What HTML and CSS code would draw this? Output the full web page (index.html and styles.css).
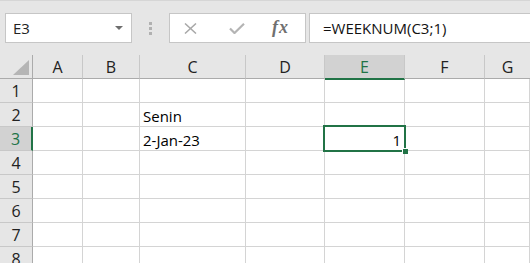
FILE: index.html
```html
<!DOCTYPE html>
<html lang="en">
<head>
  <meta charset="UTF-8">
  <title>WEEKNUM</title>
  <link rel="stylesheet" href="styles.css">
</head>
<body>
  <div class="sheet">
    <!-- name box + formula bar -->
    <div class="toolbar">
      <div class="namebox">
        <span>E3</span>
        <span class="caret"></span>
      </div>
      <div class="grip"><i></i><i></i><i></i></div>
      <div class="fxbox">
        <svg class="ico-x" width="13" height="11" viewBox="0 0 13 11"><path d="M1 0.5 L12 10.5 M12 0.5 L1 10.5" stroke="#a8a8a8" stroke-width="1.5" fill="none"/></svg>
        <svg class="ico-ok" width="16" height="11" viewBox="0 0 16 11"><path d="M1 5.5 L5.5 10 L15 0.8" stroke="#b4b4b4" stroke-width="2.2" fill="none"/></svg>
        <span class="fx">fx</span>
      </div>
      <div class="formula">=WEEKNUM(C3;1)</div>
    </div>

    <!-- grid -->
    <div class="grid">
      <div class="corner"><span class="tri"></span></div>
      <div class="colhead">A</div>
      <div class="colhead">B</div>
      <div class="colhead">C</div>
      <div class="colhead">D</div>
      <div class="colhead active">E</div>
      <div class="colhead">F</div>
      <div class="colhead last">G</div>

      <div class="rowhead">1</div>
      <div class="cell"></div><div class="cell"></div><div class="cell"></div><div class="cell"></div><div class="cell"></div><div class="cell"></div><div class="cell"></div>

      <div class="rowhead">2</div>
      <div class="cell"></div><div class="cell"></div><div class="cell">Senin</div><div class="cell"></div><div class="cell"></div><div class="cell"></div><div class="cell"></div>

      <div class="rowhead active">3</div>
      <div class="cell"></div><div class="cell"></div><div class="cell">2-Jan-23</div><div class="cell"></div><div class="cell num selected">1</div><div class="cell"></div><div class="cell"></div>

      <div class="rowhead">4</div>
      <div class="cell"></div><div class="cell"></div><div class="cell"></div><div class="cell"></div><div class="cell"></div><div class="cell"></div><div class="cell"></div>

      <div class="rowhead">5</div>
      <div class="cell"></div><div class="cell"></div><div class="cell"></div><div class="cell"></div><div class="cell"></div><div class="cell"></div><div class="cell"></div>

      <div class="rowhead">6</div>
      <div class="cell"></div><div class="cell"></div><div class="cell"></div><div class="cell"></div><div class="cell"></div><div class="cell"></div><div class="cell"></div>

      <div class="rowhead">7</div>
      <div class="cell"></div><div class="cell"></div><div class="cell"></div><div class="cell"></div><div class="cell"></div><div class="cell"></div><div class="cell"></div>

      <div class="rowhead">8</div>
      <div class="cell"></div><div class="cell"></div><div class="cell"></div><div class="cell"></div><div class="cell"></div><div class="cell"></div><div class="cell"></div>
    </div>
  </div>
</body>
</html>
```

FILE: styles.css
```css
/* Page */
body {
  margin: 0;
  background: #fff;
  font-family: "Open Sans", "Noto Sans", sans-serif;
  font-size: 15px;
  color: #000;
}
.sheet {
  width: 530px;
  height: 263px;
  overflow: hidden;
}

/* Formula bar strip */
.toolbar {
  box-sizing: border-box;
  height: 55px;
  border-top: 1px solid #d6d6d6;
  background: #e6e6e6;
  padding-top: 12px;
  display: flex;
  align-items: flex-start;
}
.namebox {
  box-sizing: border-box;
  margin-left: 5px;
  width: 127px;
  height: 30px;
  border: 1px solid #c6c6c6;
  background: #fff;
  display: flex;
  align-items: center;
  justify-content: space-between;
  padding: 0 8px 0 7px;
  color: #222;
}
.caret {
  width: 0;
  height: 0;
  border-left: 4px solid transparent;
  border-right: 4px solid transparent;
  border-top: 4px solid #6e6e6e;
}
.grip {
  width: 37px;
  height: 30px;
  display: flex;
  flex-direction: column;
  align-items: center;
  justify-content: center;
  gap: 2px;
}
.grip i {
  display: block;
  width: 3px;
  height: 3px;
  background: #b1b1b1;
}
.fxbox {
  box-sizing: border-box;
  width: 137px;
  height: 30px;
  border: 1px solid #c6c6c6;
  background: #fff;
  display: flex;
  align-items: center;
  padding-left: 14px;
}
.ico-x { margin-right: 32px; }
.ico-ok { margin-right: 27px; }
.fx {
  font-family: "Liberation Serif", serif;
  font-style: italic;
  font-weight: bold;
  font-size: 18px;
  color: #707070;
  letter-spacing: 1px;
  margin-top: -2px;
}
.formula {
  box-sizing: border-box;
  flex: 1;
  margin-left: 3px;
  height: 30px;
  border: 1px solid #c6c6c6;
  border-right: none;
  background: #fff;
  padding-left: 13px;
  line-height: 28px;
  color: #111;
}

/* Sheet grid */
.grid {
  display: grid;
  grid-template-columns: 33px 50px 57px 106px 79px 80px 80px 1fr;
  grid-auto-rows: 24px;
}
.grid > div {
  box-sizing: border-box;
}
.corner, .colhead, .rowhead {
  background: #e6e6e6;
  color: #222;
  font-size: 16px;
}
.corner {
  border-right: 1px solid #ababab;
  border-bottom: 1px solid #ababab;
  position: relative;
}
.tri {
  position: absolute;
  left: 13px;
  top: 5px;
  width: 0;
  height: 0;
  border-left: 16px solid transparent;
  border-bottom: 15px solid #b5b5b5;
}
.colhead {
  border-right: 1px solid #c8c8c8;
  border-bottom: 1px solid #ababab;
  display: flex;
  align-items: center;
  justify-content: center;
}
.colhead.last { border-right: none; }
.colhead.active {
  background: #d2d2d2;
  color: #217346;
  border-bottom: 2px solid #217346;
  margin-bottom: -1px;
  position: relative;
}
.rowhead {
  border-right: 1px solid #ababab;
  border-bottom: 1px solid #c8c8c8;
  display: flex;
  align-items: center;
  justify-content: center;
}
.rowhead.active {
  background: #d2d2d2;
  color: #217346;
  border-right: 2px solid #217346;
}
.cell {
  border-right: 1px solid #d4d4d4;
  border-bottom: 1px solid #d4d4d4;
  display: flex;
  align-items: flex-end;
  padding-left: 3px;
  line-height: 20px;
  white-space: nowrap;
}
.cell.num {
  justify-content: flex-end;
  padding: 0 3px 0 0;
}

/* Active cell frame and fill handle */
.selected {
  position: relative;
}
.selected::before {
  content: "";
  position: absolute;
  left: -2px;
  top: -2px;
  right: -2px;
  bottom: -2px;
  border: 2px solid #217346;
}
.selected::after {
  content: "";
  position: absolute;
  right: -4px;
  bottom: -4px;
  width: 5px;
  height: 5px;
  background: #217346;
  border: 1px solid #fff;
  border-right: none;
  border-bottom: none;
}
```
